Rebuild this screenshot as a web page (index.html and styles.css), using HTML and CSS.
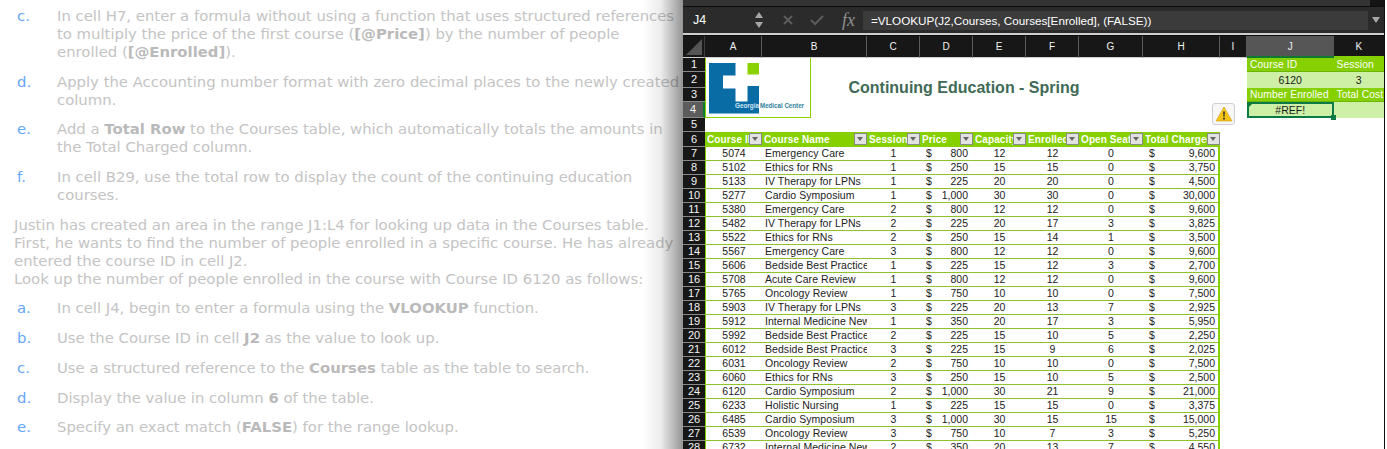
FILE: index.html
```html
<!DOCTYPE html>
<html lang="en">
<head>
<meta charset="utf-8">
<title>Continuing Education - Spring</title>
<link rel="stylesheet" href="styles.css">
</head>
<body>
<main class="page">
  <section class="steps">
    <ol class="list">
      <li><span class="mark">c.</span><p>In cell H7, enter a formula without using a function that uses structured references<br>to multiply the price of the first course (<b>[@Price]</b>) by the number of people<br>enrolled (<b>[@Enrolled]</b>).</p></li>
      <li><span class="mark">d.</span><p>Apply the Accounting number format with zero decimal places to the newly created<br>column.</p></li>
      <li><span class="mark">e.</span><p>Add a <b>Total Row</b> to the Courses table, which automatically totals the amounts in<br>the Total Charged column.</p></li>
      <li><span class="mark">f.</span><p>In cell B29, use the total row to display the count of the continuing education<br>courses.</p></li>
    </ol>
    <p class="intro">Justin has created an area in the range J1:L4 for looking up data in the Courses table.<br>First, he wants to find the number of people enrolled in a specific course. He has already<br>entered the course ID in cell J2.<br>Look up the number of people enrolled in the course with Course ID 6120 as follows:</p>
    <ol class="list">
      <li><span class="mark">a.</span><p>In cell J4, begin to enter a formula using the <b>VLOOKUP</b> function.</p></li>
      <li><span class="mark">b.</span><p>Use the Course ID in cell <b>J2</b> as the value to look up.</p></li>
      <li><span class="mark">c.</span><p>Use a structured reference to the <b>Courses</b> table as the table to search.</p></li>
      <li><span class="mark">d.</span><p>Display the value in column <b>6</b> of the table.</p></li>
      <li><span class="mark">e.</span><p>Specify an exact match (<b>FALSE</b>) for the range lookup.</p></li>
    </ol>
  </section>

  <section class="excel">
    <div class="topstrip"></div>
    <div class="fbar">
      <div class="namebox">
        <span>J4</span>
        <svg class="stepper" viewBox="0 0 8 18" width="8" height="18"><path d="M4 1 8 7H0Z"/><path d="M4 17 8 11H0Z"/></svg>
      </div>
      <div class="fbuttons">
        <svg viewBox="0 0 12 12" width="12" height="12"><path d="M2 2 10 10M10 2 2 10"/></svg>
        <svg viewBox="0 0 14 12" width="14" height="12"><path d="M1 6 5 10 13 2"/></svg>
        <span class="fx">fx</span>
      </div>
      <div class="formula">=VLOOKUP(J2,Courses, Courses[Enrolled], (FALSE))</div>
      <svg class="caret" viewBox="0 0 8 6" width="8" height="6"><path d="M0 0H8L4 6Z"/></svg>
    </div>
    <div class="fbar-line"></div>

    <div class="sheet">
      <table class="grid">
        <colgroup>
          <col class="c-rh"><col class="c-a"><col class="c-b"><col class="c-n"><col class="c-n"><col class="c-n"><col class="c-n"><col class="c-g"><col class="c-h"><col class="c-i"><col class="c-j"><col class="c-k">
        </colgroup>
        <thead>
          <tr class="r-head">
            <th class="corner"><svg viewBox="0 0 16 16" width="16" height="16"><path d="M16 0V16H0Z"/></svg></th>
            <th>A</th><th>B</th><th>C</th><th>D</th><th>E</th><th>F</th><th>G</th><th>H</th><th>I</th><th class="active">J</th><th class="k-head">K</th>
          </tr>
        </thead>
        <tbody>
          <tr class="r1"><th class="rh">1</th><td colspan="9"></td><td class="lk-h">Course ID</td><td class="lk-h">Session</td></tr>
          <tr class="r2"><th class="rh">2</th><td colspan="8" rowspan="2" class="title">Continuing Education - Spring</td><td></td><td class="lk-v">6120</td><td class="lk-v">3</td></tr>
          <tr class="r3"><th class="rh">3</th><td></td><td class="lk-h">Number Enrolled</td><td class="lk-h">Total Cost</td></tr>
          <tr class="r4"><th class="rh rh-active">4</th><td colspan="9"></td><td class="lk-v selected"><i class="tri"></i>#REF!<i class="handle"></i></td><td class="lk-v"></td></tr>
          <tr class="r5"><th class="rh">5</th><td colspan="11"></td></tr>
          <tr class="r6"><th class="rh">6</th>
            <td class="hc"><div class="hd"><span>Course ID</span><i></i></div></td>
            <td class="hc"><div class="hd"><span>Course Name</span><i></i></div></td>
            <td class="hc"><div class="hd"><span>Sessions</span><i></i></div></td>
            <td class="hc"><div class="hd"><span>Price</span><i></i></div></td>
            <td class="hc"><div class="hd"><span>Capacity</span><i></i></div></td>
            <td class="hc"><div class="hd"><span>Enrolled</span><i></i></div></td>
            <td class="hc"><div class="hd"><span>Open Seats</span><i></i></div></td>
            <td class="hc"><div class="hd"><span>Total Charged</span><i></i></div></td>
            <td colspan="3"></td></tr>
          <tr class="d"><th class="rh">7</th><td class="first">5074</td><td class="name"><div>Emergency Care</div></td><td>1</td><td><div class="acc"><span>$</span><span>800</span></div></td><td>12</td><td>12</td><td>0</td><td class="last"><div class="acc"><span>$</span><span>9,600</span></div></td><td colspan="3" class="off"></td></tr>
          <tr class="d"><th class="rh">8</th><td class="first">5102</td><td class="name"><div>Ethics for RNs</div></td><td>1</td><td><div class="acc"><span>$</span><span>250</span></div></td><td>15</td><td>15</td><td>0</td><td class="last"><div class="acc"><span>$</span><span>3,750</span></div></td><td colspan="3" class="off"></td></tr>
          <tr class="d"><th class="rh">9</th><td class="first">5133</td><td class="name"><div>IV Therapy for LPNs</div></td><td>1</td><td><div class="acc"><span>$</span><span>225</span></div></td><td>20</td><td>20</td><td>0</td><td class="last"><div class="acc"><span>$</span><span>4,500</span></div></td><td colspan="3" class="off"></td></tr>
          <tr class="d"><th class="rh">10</th><td class="first">5277</td><td class="name"><div>Cardio Symposium</div></td><td>1</td><td><div class="acc"><span>$</span><span>1,000</span></div></td><td>30</td><td>30</td><td>0</td><td class="last"><div class="acc"><span>$</span><span>30,000</span></div></td><td colspan="3" class="off"></td></tr>
          <tr class="d"><th class="rh">11</th><td class="first">5380</td><td class="name"><div>Emergency Care</div></td><td>2</td><td><div class="acc"><span>$</span><span>800</span></div></td><td>12</td><td>12</td><td>0</td><td class="last"><div class="acc"><span>$</span><span>9,600</span></div></td><td colspan="3" class="off"></td></tr>
          <tr class="d"><th class="rh">12</th><td class="first">5482</td><td class="name"><div>IV Therapy for LPNs</div></td><td>2</td><td><div class="acc"><span>$</span><span>225</span></div></td><td>20</td><td>17</td><td>3</td><td class="last"><div class="acc"><span>$</span><span>3,825</span></div></td><td colspan="3" class="off"></td></tr>
          <tr class="d"><th class="rh">13</th><td class="first">5522</td><td class="name"><div>Ethics for RNs</div></td><td>2</td><td><div class="acc"><span>$</span><span>250</span></div></td><td>15</td><td>14</td><td>1</td><td class="last"><div class="acc"><span>$</span><span>3,500</span></div></td><td colspan="3" class="off"></td></tr>
          <tr class="d"><th class="rh">14</th><td class="first">5567</td><td class="name"><div>Emergency Care</div></td><td>3</td><td><div class="acc"><span>$</span><span>800</span></div></td><td>12</td><td>12</td><td>0</td><td class="last"><div class="acc"><span>$</span><span>9,600</span></div></td><td colspan="3" class="off"></td></tr>
          <tr class="d"><th class="rh">15</th><td class="first">5606</td><td class="name"><div>Bedside Best Practices</div></td><td>1</td><td><div class="acc"><span>$</span><span>225</span></div></td><td>15</td><td>12</td><td>3</td><td class="last"><div class="acc"><span>$</span><span>2,700</span></div></td><td colspan="3" class="off"></td></tr>
          <tr class="d"><th class="rh">16</th><td class="first">5708</td><td class="name"><div>Acute Care Review</div></td><td>1</td><td><div class="acc"><span>$</span><span>800</span></div></td><td>12</td><td>12</td><td>0</td><td class="last"><div class="acc"><span>$</span><span>9,600</span></div></td><td colspan="3" class="off"></td></tr>
          <tr class="d"><th class="rh">17</th><td class="first">5765</td><td class="name"><div>Oncology Review</div></td><td>1</td><td><div class="acc"><span>$</span><span>750</span></div></td><td>10</td><td>10</td><td>0</td><td class="last"><div class="acc"><span>$</span><span>7,500</span></div></td><td colspan="3" class="off"></td></tr>
          <tr class="d"><th class="rh">18</th><td class="first">5903</td><td class="name"><div>IV Therapy for LPNs</div></td><td>3</td><td><div class="acc"><span>$</span><span>225</span></div></td><td>20</td><td>13</td><td>7</td><td class="last"><div class="acc"><span>$</span><span>2,925</span></div></td><td colspan="3" class="off"></td></tr>
          <tr class="d"><th class="rh">19</th><td class="first">5912</td><td class="name"><div>Internal Medicine News</div></td><td>1</td><td><div class="acc"><span>$</span><span>350</span></div></td><td>20</td><td>17</td><td>3</td><td class="last"><div class="acc"><span>$</span><span>5,950</span></div></td><td colspan="3" class="off"></td></tr>
          <tr class="d"><th class="rh">20</th><td class="first">5992</td><td class="name"><div>Bedside Best Practices</div></td><td>2</td><td><div class="acc"><span>$</span><span>225</span></div></td><td>15</td><td>10</td><td>5</td><td class="last"><div class="acc"><span>$</span><span>2,250</span></div></td><td colspan="3" class="off"></td></tr>
          <tr class="d"><th class="rh">21</th><td class="first">6012</td><td class="name"><div>Bedside Best Practices</div></td><td>3</td><td><div class="acc"><span>$</span><span>225</span></div></td><td>15</td><td>9</td><td>6</td><td class="last"><div class="acc"><span>$</span><span>2,025</span></div></td><td colspan="3" class="off"></td></tr>
          <tr class="d"><th class="rh">22</th><td class="first">6031</td><td class="name"><div>Oncology Review</div></td><td>2</td><td><div class="acc"><span>$</span><span>750</span></div></td><td>10</td><td>10</td><td>0</td><td class="last"><div class="acc"><span>$</span><span>7,500</span></div></td><td colspan="3" class="off"></td></tr>
          <tr class="d"><th class="rh">23</th><td class="first">6060</td><td class="name"><div>Ethics for RNs</div></td><td>3</td><td><div class="acc"><span>$</span><span>250</span></div></td><td>15</td><td>10</td><td>5</td><td class="last"><div class="acc"><span>$</span><span>2,500</span></div></td><td colspan="3" class="off"></td></tr>
          <tr class="d"><th class="rh">24</th><td class="first">6120</td><td class="name"><div>Cardio Symposium</div></td><td>2</td><td><div class="acc"><span>$</span><span>1,000</span></div></td><td>30</td><td>21</td><td>9</td><td class="last"><div class="acc"><span>$</span><span>21,000</span></div></td><td colspan="3" class="off"></td></tr>
          <tr class="d"><th class="rh">25</th><td class="first">6233</td><td class="name"><div>Holistic Nursing</div></td><td>1</td><td><div class="acc"><span>$</span><span>225</span></div></td><td>15</td><td>15</td><td>0</td><td class="last"><div class="acc"><span>$</span><span>3,375</span></div></td><td colspan="3" class="off"></td></tr>
          <tr class="d"><th class="rh">26</th><td class="first">6485</td><td class="name"><div>Cardio Symposium</div></td><td>3</td><td><div class="acc"><span>$</span><span>1,000</span></div></td><td>30</td><td>15</td><td>15</td><td class="last"><div class="acc"><span>$</span><span>15,000</span></div></td><td colspan="3" class="off"></td></tr>
          <tr class="d"><th class="rh">27</th><td class="first">6539</td><td class="name"><div>Oncology Review</div></td><td>3</td><td><div class="acc"><span>$</span><span>750</span></div></td><td>10</td><td>7</td><td>3</td><td class="last"><div class="acc"><span>$</span><span>5,250</span></div></td><td colspan="3" class="off"></td></tr>
          <tr class="d"><th class="rh">28</th><td class="first">6732</td><td class="name"><div>Internal Medicine News</div></td><td>2</td><td><div class="acc"><span>$</span><span>350</span></div></td><td>20</td><td>13</td><td>7</td><td class="last"><div class="acc"><span>$</span><span>4,550</span></div></td><td colspan="3" class="off"></td></tr>
        </tbody>
      </table>

      <figure class="logo">
        <svg viewBox="0 0 106 60" width="106" height="60">
          <path class="logo-blue" d="M4 5H30.500V17.500H18V30.500H30.500V43.500H42.500V28H54V55.500H4Z"/>
          <rect class="logo-green" x="42.500" y="5" width="11.500" height="11.500"/>
          <text class="logo-w" x="30" y="49.500" textLength="24" lengthAdjust="spacingAndGlyphs">Georgia</text>
          <text class="logo-t" x="55" y="49.500" textLength="44" lengthAdjust="spacingAndGlyphs">Medical Center</text>
        </svg>
      </figure>

      <div class="alert">
        <svg viewBox="0 0 18 16" width="18" height="16">
          <path class="al-t" d="M9 1 17 15H1Z"/>
          <path class="al-b" d="M8.100 5.500H9.900L9.500 10.800H8.500ZM8.100 11.800H9.900V13.500H8.100Z"/>
        </svg>
      </div>
    </div>
  </section>
</main>
</body>
</html>
```

FILE: styles.css
```css
* { box-sizing: border-box; }
html, body { margin: 0; padding: 0; height: 100%; background: #fff; overflow: hidden; }

.page { display: flex; width: 1387px; height: 449px; overflow: hidden; }

/* Instructions */
.steps {
  position: relative;
  flex: 0 0 683px;
  padding: 7px 0 0 14px;
  font: 14.850px/18px "DejaVu Sans", sans-serif;
  color: #c4c4c4;
  white-space: nowrap;
  overflow: hidden;
}
.steps::after {
  content: "";
  position: absolute;
  top: 0; bottom: 0; right: 0;
  width: 40px;
  background: linear-gradient(to right, rgba(0,0,0,0), rgba(0,0,0,.08) 45%, rgba(0,0,0,.42));
}
.steps b { font-weight: 700; color: #bababa; }
.steps p { margin: 0; }
.list { list-style: none; margin: 0; padding: 0 0 0 3px; display: flex; flex-direction: column; gap: 11.700px; }
.list li { display: flex; }
.mark { flex: 0 0 40px; color: #66a6f8; }
.steps .intro { margin: 11.700px 0; }

/* Excel window */
.excel {
  flex: 0 0 701px;
  height: 449px;
  background: #fff;
  overflow: hidden;
  box-shadow: 1px 0 0 #111;
  font-family: "Liberation Sans", Arial, sans-serif;
}
.topstrip { height: 7px; background: linear-gradient(to right, #333 687px, #141414 687px); border-bottom: 1px solid #0c0c0c; }
.fbar { display: flex; align-items: center; height: 26px; background: #2b2b2b; color: #fff; }
.namebox { flex: 0 0 84px; display: flex; align-items: center; justify-content: space-between; padding: 0 4px 0 10px; font-size: 12.500px; height: 24px; }
.stepper path { fill: #a6a6a6; }
.fbuttons { flex: 0 0 96px; display: flex; align-items: center; gap: 16px; padding-left: 15px; height: 24px; }
.fbuttons svg path { fill: none; stroke: #5c5c5c; stroke-width: 2; }
.fx { font: italic 18px "Liberation Serif", serif; color: #8f8f8f; margin-left: 2px; }
.formula { flex: 0 0 505px; height: 19px; background: #3b3b3b; font-size: 11.700px; line-height: 19px; padding-left: 8px; white-space: nowrap; }
.caret { margin-left: 4px; }
.caret path { fill: #a8a8a8; }
.fbar-line { height: 3px; background: #cfcfcf; border-bottom: 1px solid #0c0c0c; }

/* Sheet */
.sheet { position: relative; }
.grid { border-collapse: separate; border-spacing: 0; table-layout: fixed; width: 701px; font-size: 10.500px; color: #1a1a1a; }
.c-rh { width: 22px; }
.c-a { width: 57px; }
.c-b { width: 105px; }
.c-n { width: 53px; }
.c-g { width: 64px; }
.c-h { width: 77px; }
.c-i { width: 27px; }
.c-j { width: 86.500px; }
.c-k { width: 50.500px; }
.grid td, .grid th { padding: 0; overflow: hidden; white-space: nowrap; text-align: center; line-height: 13px; font-weight: 400; }

.grid .r-head th { height: 22px; background: #171717; color: #f2f2f2; font-size: 10px; border-right: 1px solid #5a5a5a; border-bottom: 1px solid #cfcfcf; }
.grid .r-head .corner { border-right: 1px solid #3c3c3c; padding: 3px 2px 0 0; vertical-align: top; }
.corner svg { display: block; margin-left: auto; }
.corner path { fill: #555; }
.grid .r-head .active { background: #565656; border-right: 0; border-bottom: 2px solid #0f7a2f; }
.grid .r-head .k-head { border-right: 0; border-bottom: 2px solid #86d000; }

.grid .rh { background: #171717; color: #f4f4f4; font-size: 11px; border-bottom: 1px solid #8a8a8a; }
.grid .rh-active { background: #5c5c5c; border-right: 2px solid #0f7a2f; }
.r1 td, .r1 th { height: 14px; }
.r2 td, .r2 th { height: 16px; }
.r3 td, .r3 th { height: 14px; }
.r4 td, .r4 th { height: 16px; }
.r5 td, .r5 th { height: 13px; }
.r6 td, .r6 th { height: 15px; }

.grid .title { font-size: 16px; line-height: 20px; font-weight: 700; color: #3f6a56; padding-top: 2px; padding-left: 3px; }

.grid .lk-h { background: #86d000; color: #fff; text-align: left; padding-left: 3px; border-bottom: 1px solid #6cb400; font-size: 10.300px; letter-spacing: .1px; }
.lk-v { background: #cdf0a6; }
.grid .selected { position: relative; outline: 2px solid #0b7a45; outline-offset: -2px; overflow: visible; }
.tri { position: absolute; left: 2px; top: 2px; border-style: solid; border-width: 3px 3px 0 0; border-color: #0f7a2f transparent transparent transparent; }
.handle { position: absolute; right: -2px; bottom: -2px; width: 5px; height: 5px; background: #0b7a45; }

.hc { background: #86d000; border-bottom: 1px solid #86d000; }
.hd { display: flex; align-items: center; height: 14px; padding-left: 2px; color: #fff; font-weight: 700; font-size: 10px; letter-spacing: .1px; }
.hd span { flex: 1; min-width: 0; overflow: hidden; text-align: left; }
.hd i { flex: 0 0 13px; height: 12px; background: #e2e2e2; border: 1px solid #8a8a8a; position: relative; }
.hd i::after { content: ""; position: absolute; left: 2px; top: 3px; border-style: solid; border-width: 4px 3.500px 0; border-color: #666 transparent transparent; }

.d td, .d th { height: 14px; }
.d td { border-bottom: 1px solid #8fc32a; color: #222; }
.d td.off { border-bottom: 0; }
.d .first { border-left: 1px solid #86d000; }
.d .last { border-right: 2px solid #86d000; }
.grid .name { text-align: left; }
.name div { padding-left: 3px; overflow: hidden; letter-spacing: .05px; }
.acc { display: flex; justify-content: space-between; padding: 0 5px 0 6px; }
.last .acc { padding-right: 3px; }

/* Floating objects over the sheet */
.logo { position: absolute; left: 22px; top: 22px; width: 106px; height: 60px; margin: 0; background: #fff; border: 1px solid #8ad100; border-top: 0; }
.logo svg { display: block; margin-left: -1px; }
.logo-blue { fill: #0a6ca5; }
.logo-green { fill: #8ad100; }
.logo-w { font: 700 6.500px "Liberation Sans", Arial, sans-serif; fill: #cfe6f2; }
.logo-t { font: 700 6.500px "Liberation Sans", Arial, sans-serif; fill: #2f7f9b; }

.alert { position: absolute; left: 529px; top: 67px; width: 23px; height: 22px; display: flex; align-items: center; justify-content: center; background: #f7f7f7; border: 1px solid #cfcfcf; border-radius: 3px; }
.al-t { fill: #f5c518; stroke: #c99a10; stroke-width: .6; }
.al-b { fill: #2a2a2a; }
```
